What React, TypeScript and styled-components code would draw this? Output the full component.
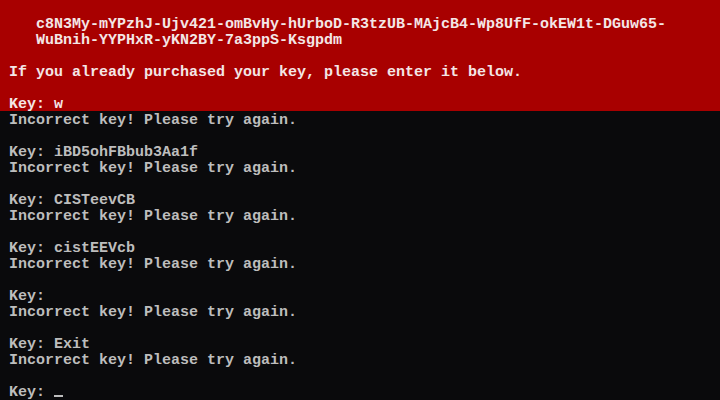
import React from "react";
import styled, { createGlobalStyle } from "styled-components";

const CELL_W = 9;
const CELL_H = 16;

const GlobalStyle = createGlobalStyle`
    html, body {
        margin: 0;
        padding: 0;
        background: #0a0a0c;
    }
`;

const Screen = styled.div`
    width: 720px;
    height: 400px;
    overflow: hidden;
    background: #0a0a0c;
    font-family: "Liberation Mono", "DejaVu Sans Mono", monospace;
    font-size: 15px;
    font-weight: bold;
`;

const Banner = styled.div`
    background: #a80000;
    color: #f4e6e6;
    padding-top: 15px;
`;

const Console = styled.div`
    color: #bdbdbd;
`;

// one text-mode row: 9px cells, 16px tall, glyphs sit low like VGA
const Line = styled.div<{ $indent?: number }>`
    box-sizing: border-box;
    height: ${CELL_H}px;
    padding-top: 3px;
    padding-left: ${(p) => (p.$indent ?? 1) * CELL_W}px;
    line-height: 13px;
    white-space: pre;
`;

const Cursor = styled.span`
    display: inline-block;
    width: ${CELL_W}px;
    height: 2px;
    background: #bdbdbd;
    vertical-align: -1px;
`;

const attempts = ["iBD5ohFBbub3Aa1f", "CISTeevCB", "cistEEVcb", "", "Exit"];

const App: React.FC = () => {
    return (
        <>
            <GlobalStyle />
            <Screen>
                <Banner>
                    <Line $indent={4}>c8N3My-mYPzhJ-Ujv421-omBvHy-hUrboD-R3tzUB-MAjcB4-Wp8UfF-okEW1t-DGuw65-</Line>
                    <Line $indent={4}>WuBnih-YYPHxR-yKN2BY-7a3ppS-Ksgpdm</Line>
                    <Line />
                    <Line>If you already purchased your key, please enter it below.</Line>
                    <Line />
                    <Line>Key: w</Line>
                </Banner>
                <Console>
                    <Line>Incorrect key! Please try again.</Line>
                    {attempts.map((key, i) => (
                        <React.Fragment key={i}>
                            <Line />
                            <Line>{"Key: " + key}</Line>
                            <Line>Incorrect key! Please try again.</Line>
                        </React.Fragment>
                    ))}
                    <Line />
                    <Line>
                        {"Key: "}
                        <Cursor />
                    </Line>
                </Console>
            </Screen>
        </>
    );
};

export default App;
